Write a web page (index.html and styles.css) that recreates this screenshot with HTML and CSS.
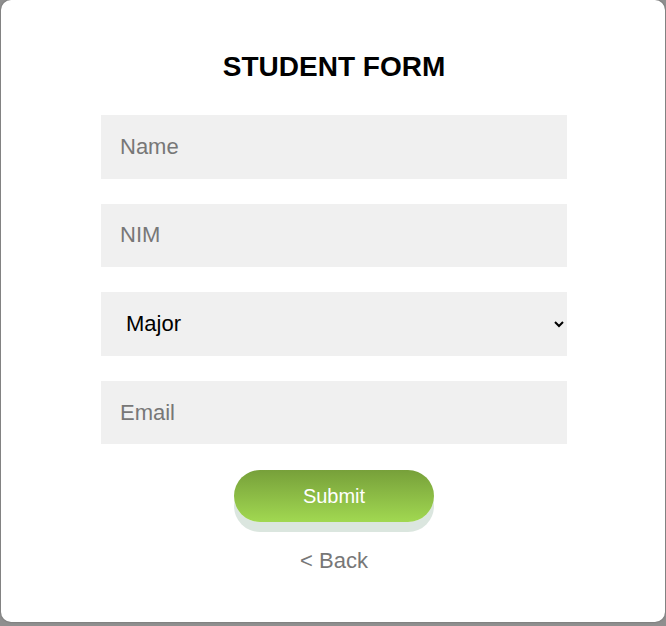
FILE: index.html
```html
<!DOCTYPE html>
<html>
<head>
<meta charset="utf-8">
<link rel="stylesheet" href="styles.css">
</head>
<body>
<div class="card">
  <h1 class="title">STUDENT FORM</h1>
  <form class="form">
    <input class="field" type="text" placeholder="Name">
    <input class="field" type="text" placeholder="NIM">
    <select class="field select">
      <option>Major</option>
    </select>
    <input class="field" type="email" placeholder="Email">
    <button class="submit" type="button">Submit</button>
    <a class="back" href="#">&lt; Back</a>
  </form>
</div>
</body>
</html>
```
FILE: styles.css
```css
html, body {
  margin: 0;
  padding: 0;
  height: 100%;
}
body {
  background: #8f8f8f;
  font-family: "Liberation Sans", Arial, sans-serif;
  overflow: hidden;
}
.card {
  box-sizing: border-box;
  height: 622px;
  margin: 0 1px;
  background: #fff;
  border-radius: 10px;
  box-shadow: 0 0 2px rgba(0,0,0,0.35);
  padding: 51px 0 0 2px;
}
.title {
  margin: 0 0 32px;
  text-align: center;
  font-size: 28px;
  font-weight: bold;
  line-height: 32px;
  color: #000;
}
.form {
  display: flex;
  flex-direction: column;
  align-items: center;
  gap: 25px;
}
.field {
  box-sizing: border-box;
  width: 466px;
  height: 63.6px;
  border: none;
  outline: none;
  background: #f0f0f0;
  padding: 0 0 0 19px;
  font-family: "Liberation Sans", Arial, sans-serif;
  font-size: 22px;
  color: #000;
  border-radius: 0;
}
.field::placeholder {
  color: #777;
}
.select {
  padding-left: 21px;
  padding-right: 6px;
}
.submit {
  width: 200px;
  height: 52px;
  border: none;
  border-radius: 26px;
  background: linear-gradient(#77a03a, #a1d851);
  box-shadow: 0 10px 0 #dbe6df;
  color: #fff;
  font-family: "Liberation Sans", Arial, sans-serif;
  font-size: 20px;
  margin-top: 1px;
}
.back {
  margin-top: 1px;
  font-size: 22px;
  line-height: 26px;
  color: #777;
  text-decoration: none;
}
```
